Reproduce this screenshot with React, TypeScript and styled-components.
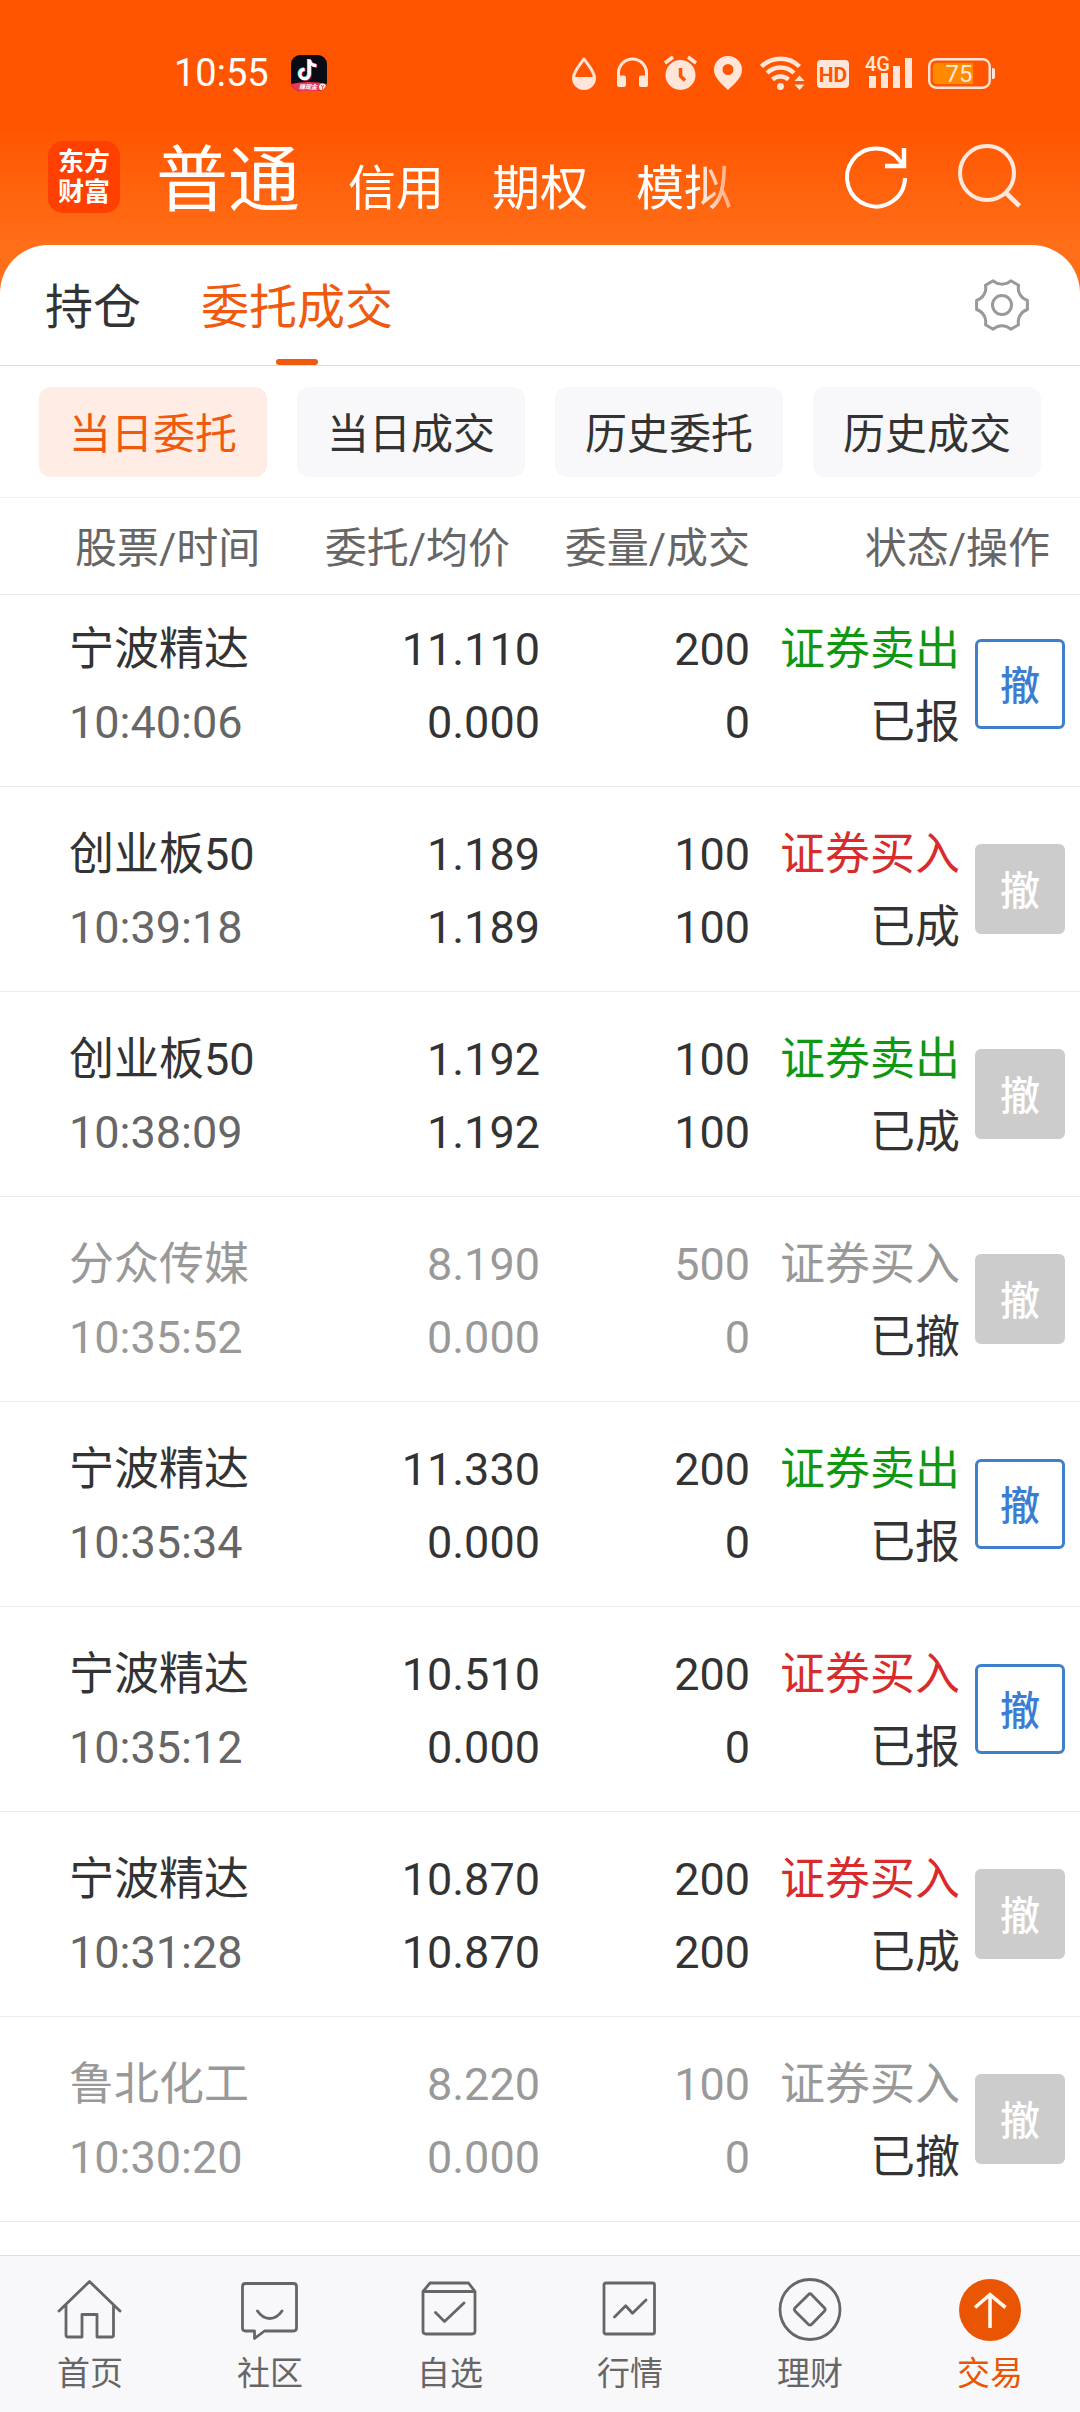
import React from "react";
import styled, { createGlobalStyle } from "styled-components";

const ACCENT = "#ea5504";
const HIGHLIGHT = "#f05a0f";
const INK = "#333333";
const MUTED = "#666666";
const FAINT = "#999999";

const GlobalStyle = createGlobalStyle`
  * { box-sizing: border-box; }
  body {
    margin: 0;
    background: #ffffff;
    color: ${INK};
    font-family: Roboto, "Noto Sans CJK SC", sans-serif;
  }
  button {
    margin: 0;
    padding: 0;
    border: 0;
    background: none;
    color: inherit;
    font: inherit;
  }
  a { color: inherit; text-decoration: none; }
  svg { display: block; overflow: visible; flex: none; }
`;

const Page = styled.div`
  display: flex;
  flex-direction: column;
  min-height: 100vh;
  background: linear-gradient(#ff5500 0, #ff5500 125px, #ff6e18 245px);
`;

const StatusBar = styled.div`
  display: flex;
  align-items: center;
  height: 97px;
  padding: 48px 84px 0 174px;
  color: #ffffff;
`;

const Clock = styled.time`
  margin-right: 22px;
  font-size: 38px;
  line-height: 48px;
`;

const StatusIcons = styled.div`
  display: flex;
  align-items: center;
  gap: 12px;
  margin-left: auto;
  color: #ffe6d9;
`;

const AppHeader = styled.header`
  display: flex;
  align-items: center;
  height: 148px;
  padding: 12px 60px 0 48px;
  color: #ffffff;
`;

const Logo = styled.a`
  display: grid;
  place-content: center;
  flex: none;
  width: 72px;
  height: 72px;
  border-radius: 15px;
  background: #ff4000;
  font-size: 26px;
  font-weight: 700;
  line-height: 30px;
`;

const AccountTabs = styled.nav`
  display: flex;
  align-items: baseline;
  flex: 1;
  gap: 48px;
  margin: 0 84px 0 36px;
  padding-top: 15px;
  overflow: hidden;
  white-space: nowrap;
  mask-image: linear-gradient(to left, transparent 0, #000000 66px);
`;

const AccountTab = styled.button<{ $active?: boolean }>`
  flex: none;
  font-size: ${(p) => (p.$active ? 72 : 48)}px;
  line-height: 84px;
`;

const HeaderActions = styled.div`
  display: flex;
  gap: 48px;
`;

const Panel = styled.main`
  flex: 1;
  border-radius: 48px 48px 0 0;
  background: #ffffff;
`;

const SectionTabs = styled.div`
  display: flex;
  align-items: stretch;
  gap: 60px;
  height: 121px;
  padding: 0 51px 0 45px;
  border-bottom: 1px solid #dddddd;
`;

const SectionTab = styled.button<{ $active?: boolean }>`
  display: flex;
  flex-direction: column;
  align-items: center;
  justify-content: flex-end;
  color: ${(p) => (p.$active ? HIGHLIGHT : INK)};
  font-size: 48px;
  line-height: 102px;

  &::after {
    content: "";
    width: 42px;
    height: 6px;
    border-radius: 3px;
    background: ${(p) => (p.$active ? HIGHLIGHT : "transparent")};
  }
`;

const SettingsButton = styled.button`
  margin-left: auto;
`;

const Filters = styled.div`
  display: grid;
  grid-template-columns: repeat(4, 1fr);
  gap: 30px;
  padding: 21px 39px 20px;
  border-bottom: 1px solid #f3f3f3;
`;

const Filter = styled.button<{ $active?: boolean }>`
  height: 90px;
  padding-top: 5px;
  border-radius: 12px;
  background: ${(p) => (p.$active ? "#ffede5" : "#f8f8fa")};
  color: ${(p) => (p.$active ? HIGHLIGHT : INK)};
  font-size: 42px;
  line-height: 60px;
`;

const Orders = styled.table`
  width: 100%;
  table-layout: fixed;
  border-collapse: separate;
  border-spacing: 0;
`;

const Col = styled.col<{ $width?: number }>`
  width: ${(p) => (p.$width ? `${p.$width}px` : "auto")};
`;

const HeadCell = styled.th<{ $align: "left" | "right"; $inset?: number }>`
  height: 97px;
  padding: ${(p) =>
    p.$align === "left" ? `5px 0 0 ${p.$inset ?? 0}px` : `5px ${p.$inset ?? 0}px 0 0`};
  border-bottom: 1px solid #ececec;
  color: ${MUTED};
  font-size: 42px;
  font-weight: 400;
  line-height: 60px;
  text-align: ${(p) => p.$align};
  white-space: nowrap;
`;

const Cell = styled.td<{ $align?: "left" | "right" }>`
  padding: 31px 0 27px;
  border-bottom: 1px solid #ececec;
  font-size: 45px;
  line-height: 73px;
  text-align: ${(p) => p.$align ?? "right"};
  white-space: nowrap;

  &:first-child { padding-left: 69px; }
  tr:first-child > & { padding-top: 18px; }
`;

const ActionCell = styled.td`
  padding: 29px 0 29px 15px;
  border-bottom: 1px solid #ececec;

  tr:first-child > & { padding-top: 16px; }
`;

const Line = styled.div<{ $color?: string }>`
  color: ${(p) => p.$color ?? INK};
`;

const CancelButton = styled.button`
  display: block;
  width: 90px;
  height: 90px;
  padding-top: 5px;
  border: 3px solid #3f7fcc;
  border-radius: 6px;
  color: #3b7dd2;
  font-size: 40px;
  font-weight: 500;
  line-height: 60px;

  &:disabled {
    border-color: #cccccc;
    background: #cccccc;
    color: #ffffff;
  }
`;

const TabBar = styled.nav`
  display: grid;
  grid-template-columns: repeat(6, 1fr);
  padding: 22px 0 18px;
  border-top: 1px solid #dfdfdf;
  background: #f8f8fa;
`;

const TabLink = styled.a<{ $active?: boolean }>`
  display: flex;
  flex-direction: column;
  align-items: center;
  gap: 12px;
  color: ${(p) => (p.$active ? ACCENT : MUTED)};
  font-size: 33px;
  line-height: 40px;
`;

type IconProps = { width?: number; height?: number; children: React.ReactNode };

const Glyph = ({ width = 36, height = 36, children }: IconProps) => (
  <svg width={width} height={height} viewBox={`0 0 ${width} ${height}`} fill="none" aria-hidden="true">
    {children}
  </svg>
);

const VideoAppIcon = () => (
  <Glyph>
    <defs>
      <clipPath id="badge">
        <rect width="36" height="36" rx="9" />
      </clipPath>
    </defs>
    <g clipPath="url(#badge)">
      <rect width="36" height="36" fill="#0b0b16" />
      <g strokeWidth="3.2">
        <path d="M17.500 4v14.500a4.700 4.700 0 1 1-4.700-4.700M17.500 4.500c.6 3.400 3.200 5.500 7 5.700" stroke="#25f4ee" />
        <path d="M19.200 5v14.500a4.700 4.700 0 1 1-4.700-4.700M19.200 5.500c.6 3.400 3.200 5.500 7 5.700" stroke="#fe2c55" />
        <path d="M18.300 4.500v14.500a4.700 4.700 0 1 1-4.700-4.700M18.300 5c.6 3.400 3.200 5.500 7 5.700" stroke="#ffffff" />
      </g>
      <path d="M0 29q18-4 36 0v7H0z" fill="#e8375a" />
      <text x="8" y="34" fill="#ffffff" fontSize="6" fontWeight="700" fontStyle="italic">赚现金</text>
      <circle cx="31.500" cy="32" r="3.500" fill="#ffe9d6" />
      <path d="M30.300 30l1.200 2 1.200-2M31.500 32v2.500" stroke="#e8375a" strokeWidth=".8" />
    </g>
  </Glyph>
);

const DropIcon = () => (
  <Glyph>
    <path d="M17 4C12.500 10.500 6.500 16.500 6.500 23a10.500 10.500 0 0 0 21 0C27.500 16.500 21.500 10.500 17 4z" stroke="currentColor" strokeWidth="3" strokeLinejoin="round" />
    <path d="M6 22h22a11 11 0 0 1-22 0z" fill="currentColor" />
  </Glyph>
);

const HeadphonesIcon = () => (
  <Glyph>
    <path d="M3.500 26v-8a14 14 0 0 1 28 0v8" stroke="currentColor" strokeWidth="3" />
    <rect x="2" y="20.500" width="9" height="11.500" rx="2" fill="currentColor" />
    <rect x="24" y="20.500" width="9" height="11.500" rx="2" fill="currentColor" />
  </Glyph>
);

const AlarmIcon = () => (
  <Glyph>
    <circle cx="17.500" cy="20" r="15" fill="currentColor" />
    <path d="M2 8l8-6M25 2l8 6" stroke="currentColor" strokeWidth="3.500" />
    <path d="M17.500 13v8l4.500 4.500" stroke="#ff5500" strokeWidth="3.500" />
  </Glyph>
);

const PinIcon = () => (
  <Glyph>
    <path fillRule="evenodd" d="M17 1a14 14 0 0 1 14 14c0 8-8 14-14 20C11 29 3 23 3 15A14 14 0 0 1 17 1zm0 8a5.500 5.500 0 1 0 0 11 5.500 5.500 0 0 0 0-11z" fill="currentColor" />
  </Glyph>
);

const WifiIcon = () => (
  <Glyph width={46}>
    <g stroke="currentColor" strokeWidth="4.400">
      <path d="M2.500 11.500a27 27 0 0 1 38 0" />
      <path d="M8 18a19.500 19.500 0 0 1 27 0" />
      <path d="M13.500 24.500a12 12 0 0 1 16 0" />
    </g>
    <circle cx="21.500" cy="31.500" r="3.400" fill="currentColor" />
    <path d="M40.500 20.500l5 5.500h-10zM40.500 35l5-5.500h-10z" fill="currentColor" />
  </Glyph>
);

const HdIcon = () => (
  <Glyph width={35}>
    <rect x="0" y="5" width="32" height="28" rx="4" fill="currentColor" />
    <text x="16" y="27" textAnchor="middle" fill="#ff5500" fontSize="21" fontWeight="700">HD</text>
  </Glyph>
);

const SignalIcon = () => (
  <Glyph width={50}>
    <text x="1" y="16" fill="currentColor" fontSize="20" fontWeight="500">4G</text>
    <path d="M5 21h7v12H5zM17 18h7v15h-7zM29 11h7v22h-7zM41 3h7v30h-7z" fill="currentColor" />
  </Glyph>
);

const BatteryIcon = () => (
  <Glyph width={70}>
    <rect x="3.200" y="4.200" width="60.500" height="28.500" rx="7" stroke="currentColor" strokeWidth="2.400" />
    <path d="M11 8h36v21H11q-4 0-4-4V12q0-4 4-4z" fill="#ff8a00" />
    <path d="M66 13h1q2 0 2 2v7q0 2-2 2h-1z" fill="currentColor" />
    <text x="33" y="27" textAnchor="middle" fill="currentColor" fontSize="24">75</text>
  </Glyph>
);

const RefreshIcon = () => (
  <Glyph width={64} height={64}>
    <path d="M61 33a29 29 0 1 1-5.500-17.500L60 21" stroke="#ffffff" strokeWidth="4" />
    <path d="M60 3v18H41" stroke="#ffffff" strokeWidth="4.500" />
  </Glyph>
);

const SearchIcon = () => (
  <Glyph width={64} height={64}>
    <g stroke="#ffe9de" strokeWidth="4">
      <circle cx="31" cy="28" r="27" />
      <path d="M49.500 47.500L63.500 61" strokeWidth="4.600" />
    </g>
  </Glyph>
);

/* Six teeth, one every 60 degrees, joined by arcs that curve inwards. */
const gearPath = (() => {
  const at = (deg: number) => {
    const a = (deg * Math.PI) / 180;
    return `${(27 + 25.8 * Math.cos(a)).toFixed(2)} ${(27 + 25.8 * Math.sin(a)).toFixed(2)}`;
  };
  let d = `M${at(-10)}`;
  for (let k = 0; k < 6; k += 1) {
    d += `L${at(k * 60 + 10)}A13 13 0 0 0 ${at(k * 60 + 50)}`;
  }
  return `${d}z`;
})();

const GearIcon = () => (
  <Glyph width={54} height={54}>
    <g stroke={FAINT} strokeWidth="3" strokeLinejoin="round">
      <path d={gearPath} />
      <circle cx="27" cy="27" r="9.500" />
    </g>
  </Glyph>
);

const NavGlyph = ({ children }: { children: React.ReactNode }) => (
  <Glyph width={64} height={64}>
    <g stroke="currentColor" strokeWidth="2.800" strokeLinecap="round" strokeLinejoin="round">{children}</g>
  </Glyph>
);

const navItems = [
  {
    label: "首页",
    icon: <path d="M1 33L31.500 3.500 62 33M8 27v30q0 2 2 2h14V36.500h15V59h14.500q2 0 2-2V27" />,
  },
  {
    label: "社区",
    icon: <path d="M7.500 5.500h48q3 0 3 3V50q0 3-3 3h-29l-10 7.500V53h-9q-3 0-3-3V8.500q0-3 3-3zM19.500 33q5 7.500 12.200 7.500T44 33" />,
  },
  {
    label: "自选",
    icon: <path d="M5 13.500l7-8.500h38.500l6.500 8.500zM5 13.500V53q0 3 3 3h46q3 0 3-3V13.500M17.500 34.500l9 9L46 25" />,
  },
  {
    label: "行情",
    icon: <path d="M8 5h46.500q2 0 2 2v47q0 2-2 2H8q-2 0-2-2V7q0-2 2-2zM16.500 39l11.200-11.200 6.800 7.400L48 22" />,
  },
  {
    label: "理财",
    icon: (
      <>
        <circle cx="32" cy="31.500" r="30" />
        <path d="M30.300 16.700q1.700-1.700 3.400 0L46.300 29.800q1.700 1.700 0 3.400L33.700 46.300q-1.700 1.700-3.400 0L17.200 33.200q-1.700-1.700 0-3.400z" />
      </>
    ),
  },
  {
    label: "交易",
    active: true,
    icon: (
      <>
        <circle cx="32" cy="32" r="31" fill={ACCENT} stroke="none" />
        <path d="M32 50V17M17 29.500L32 16.500 47.500 29.500" stroke="#fff6ee" strokeWidth="3.600" strokeLinecap="butt" strokeLinejoin="miter" />
      </>
    ),
  },
];

type Order = {
  name: string;
  time: string;
  price: string;
  average: string;
  quantity: number;
  filled: number;
  side: "买入" | "卖出";
  status: "已报" | "已成" | "已撤";
};

const orders: Order[] = [
  { name: "宁波精达", time: "10:40:06", price: "11.110", average: "0.000", quantity: 200, filled: 0, side: "卖出", status: "已报" },
  { name: "创业板50", time: "10:39:18", price: "1.189", average: "1.189", quantity: 100, filled: 100, side: "买入", status: "已成" },
  { name: "创业板50", time: "10:38:09", price: "1.192", average: "1.192", quantity: 100, filled: 100, side: "卖出", status: "已成" },
  { name: "分众传媒", time: "10:35:52", price: "8.190", average: "0.000", quantity: 500, filled: 0, side: "买入", status: "已撤" },
  { name: "宁波精达", time: "10:35:34", price: "11.330", average: "0.000", quantity: 200, filled: 0, side: "卖出", status: "已报" },
  { name: "宁波精达", time: "10:35:12", price: "10.510", average: "0.000", quantity: 200, filled: 0, side: "买入", status: "已报" },
  { name: "宁波精达", time: "10:31:28", price: "10.870", average: "10.870", quantity: 200, filled: 200, side: "买入", status: "已成" },
  { name: "鲁北化工", time: "10:30:20", price: "8.220", average: "0.000", quantity: 100, filled: 0, side: "买入", status: "已撤" },
];

const OrderRow = ({ order }: { order: Order }) => {
  const cancelled = order.status === "已撤";
  const text = cancelled ? FAINT : INK;
  const sideColor = cancelled ? FAINT : order.side === "买入" ? "#d92b2b" : "#0f980f";
  return (
    <tr>
      <Cell $align="left">
        <Line $color={text}>{order.name}</Line>
        <Line $color={cancelled ? FAINT : MUTED}>{order.time}</Line>
      </Cell>
      <Cell>
        <Line $color={text}>{order.price}</Line>
        <Line $color={text}>{order.average}</Line>
      </Cell>
      <Cell>
        <Line $color={text}>{order.quantity}</Line>
        <Line $color={text}>{order.filled}</Line>
      </Cell>
      <Cell>
        <Line $color={sideColor}>证券{order.side}</Line>
        <Line>{order.status}</Line>
      </Cell>
      <ActionCell>
        <CancelButton type="button" disabled={order.status !== "已报"}>撤</CancelButton>
      </ActionCell>
    </tr>
  );
};

export default function App() {
  return (
    <>
      <GlobalStyle />
      <Page>
        <StatusBar>
          <Clock>10:55</Clock>
          <VideoAppIcon />
          <StatusIcons>
            <DropIcon />
            <HeadphonesIcon />
            <AlarmIcon />
            <PinIcon />
            <WifiIcon />
            <HdIcon />
            <SignalIcon />
            <BatteryIcon />
          </StatusIcons>
        </StatusBar>

        <AppHeader>
          <Logo href="#home">
            <span>东方</span>
            <span>财富</span>
          </Logo>
          <AccountTabs>
            <AccountTab type="button" $active>普通</AccountTab>
            <AccountTab type="button">信用</AccountTab>
            <AccountTab type="button">期权</AccountTab>
            <AccountTab type="button">模拟</AccountTab>
          </AccountTabs>
          <HeaderActions>
            <button type="button" aria-label="刷新"><RefreshIcon /></button>
            <button type="button" aria-label="搜索"><SearchIcon /></button>
          </HeaderActions>
        </AppHeader>

        <Panel>
          <SectionTabs>
            <SectionTab type="button">持仓</SectionTab>
            <SectionTab type="button" $active>委托成交</SectionTab>
            <SettingsButton type="button" aria-label="设置"><GearIcon /></SettingsButton>
          </SectionTabs>

          <Filters>
            <Filter type="button" $active>当日委托</Filter>
            <Filter type="button">当日成交</Filter>
            <Filter type="button">历史委托</Filter>
            <Filter type="button">历史成交</Filter>
          </Filters>

          <Orders>
            <colgroup>
              <Col />
              <Col $width={216} />
              <Col $width={210} />
              <Col $width={210} />
              <Col $width={120} />
            </colgroup>
            <thead>
              <tr>
                <HeadCell $align="left" $inset={75}>股票/时间</HeadCell>
                <HeadCell $align="right" $inset={30}>委托/均价</HeadCell>
                <HeadCell $align="right">委量/成交</HeadCell>
                <HeadCell $align="right" $inset={30} colSpan={2}>状态/操作</HeadCell>
              </tr>
            </thead>
            <tbody>
              {orders.map((order) => (
                <OrderRow key={order.time} order={order} />
              ))}
            </tbody>
          </Orders>
        </Panel>

        <TabBar>
          {navItems.map((item) => (
            <TabLink key={item.label} href={`#${item.label}`} $active={item.active}>
              <NavGlyph>{item.icon}</NavGlyph>
              {item.label}
            </TabLink>
          ))}
        </TabBar>
      </Page>
    </>
  );
}
